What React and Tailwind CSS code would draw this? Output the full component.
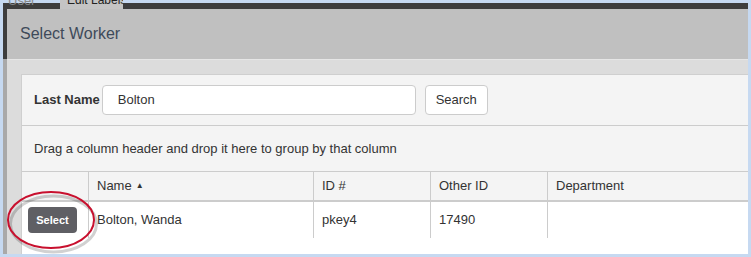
const cols = [
  { label: "Name", w: "w-[225px]", sort: true },
  { label: "ID #", w: "w-[117px]" },
  { label: "Other ID", w: "w-[117px]" },
  { label: "Department", w: "w-[220px]" },
];

const row = ["Bolton, Wanda", "pkey4", "17490", ""];

export default function App() {
  return (
    <div className="w-[751px] h-[257px] bg-[#c6d9f1] px-[3px] pb-[3px] flex flex-col overflow-hidden relative font-['Liberation_Sans',Arial,sans-serif] text-[13px] text-[#333]">
      {/* background app tab strip */}
      <div className="h-[9px] border-t-[3px] border-[#c6d9f1] bg-[#3d3d3d] shrink-0 relative">
        <div className="absolute left-[5px] -top-[9px] text-[13px] leading-[13px] text-[#8a8a8a] whitespace-nowrap">User</div>
        <div className="absolute left-[57px] -top-[3px] h-[9px] w-[63px] bg-[#c4c4c4] overflow-hidden">
          <div className="text-[12px] leading-[12px] -mt-[6px] ml-[7px] text-[#222] whitespace-nowrap">Edit Labels</div>
        </div>
      </div>

      <div className="flex flex-1 min-h-0">
        <div className="w-[4px] flex flex-col">
          <div className="h-[50px] bg-[#3d3d3d]" />
          <div className="flex-1 bg-[#a9a9a9]" />
        </div>

        <div className="flex-1 flex flex-col min-w-0 overflow-hidden">
          <div className="h-[50px] shrink-0 bg-[#c0c0c0] flex items-center px-[13px]">
            <div className="text-[16px] text-[#3e4a5a]">Select Worker</div>
          </div>

          <div className="flex-1 bg-[#dcdcdc] border-t border-[#e6e6e6] pt-[14px] pl-[14px] overflow-hidden">
            <div className="w-[760px] h-full bg-[#f4f4f4] border-l border-t border-[#cfcfcf] flex flex-col">
              <div className="h-[51px] shrink-0 flex items-center pl-[12px] border-b border-[#cccccc]">
                <div className="font-bold">Last Name</div>
                <div className="ml-[2px] w-[314px] h-[30px] bg-white border border-[#cccccc] rounded-[4px] flex items-center pl-[15px]">
                  Bolton
                </div>
                <div className="ml-[9px] w-[63px] h-[30px] bg-white border border-[#cccccc] rounded-[4px] flex items-center justify-center">
                  Search
                </div>
              </div>

              <div className="h-[46px] shrink-0 flex items-center pl-[12px] border-b border-[#cccccc]">
                Drag a column header and drop it here to group by that column
              </div>

              <div className="h-[30px] shrink-0 flex border-b-2 border-[#cccccc]">
                <div className="w-[66px]" />
                {cols.map((c) => (
                  <div key={c.label} className={`${c.w} border-l border-[#cccccc] flex items-center pl-[8px]`}>
                    {c.label}
                    {c.sort && <span className="ml-[4px] text-[8px]">▲</span>}
                  </div>
                ))}
              </div>

              <div className="flex-1 bg-white">
                <div className="h-[36px] flex">
                  <div className="w-[66px] flex items-center pl-[6px]">
                    <div className="w-[49px] h-[26px] bg-[#5f5f64] rounded-[4px] text-white font-bold text-[11px] flex items-center justify-center">
                      Select
                    </div>
                  </div>
                  {cols.map((c, i) => (
                    <div key={c.label} className={`${c.w} border-l border-[#cccccc] flex items-center pl-[8px]`}>
                      {row[i]}
                    </div>
                  ))}
                </div>
              </div>
            </div>
          </div>
        </div>
      </div>

      {/* red annotation ellipse */}
      <svg className="absolute left-0 top-[186px]" width="110" height="70" viewBox="0 0 110 70">
        <ellipse cx="52" cy="36" rx="43" ry="28" fill="none" stroke="#000" strokeOpacity="0.18" strokeWidth="3" transform="translate(1.5 2)" />
        <ellipse cx="51" cy="34" rx="43" ry="28" fill="none" stroke="#c8102e" strokeWidth="2" />
      </svg>
    </div>
  );
}
